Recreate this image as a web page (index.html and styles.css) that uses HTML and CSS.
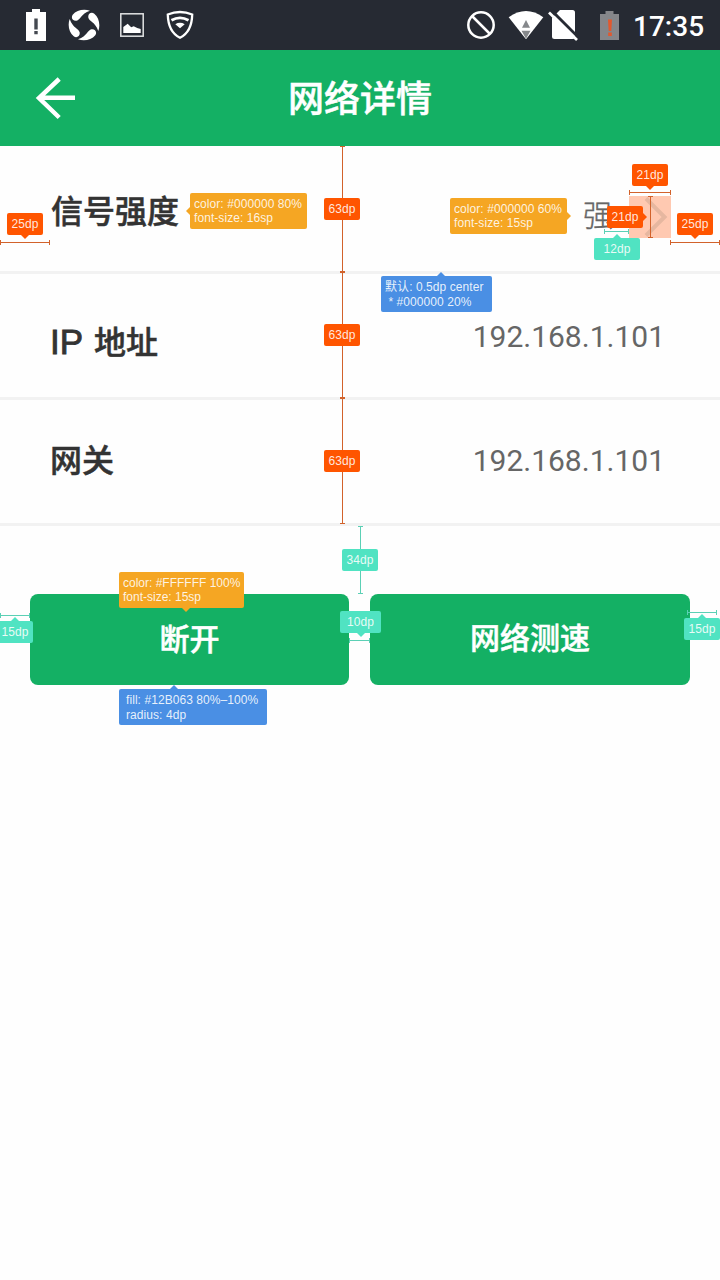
FILE: index.html
```html
<!DOCTYPE html>
<html lang="zh-CN">
<head>
<meta charset="utf-8">
<title>网络详情</title>
<link rel="stylesheet" href="styles.css">
</head>
<body>
<div class="screen">
  <div class="status-bar">
    <div class="status-group status-left">
      <svg width="20" height="32" viewBox="26 9 20 32"><path fill="#fff" d="M32 9h8v3h6v29H26V12h6z"/><path fill="#444951" d="M34.300 18.500h3.400v11h-3.400zM34.300 31h3.400v3.200h-3.400z"/></svg>
      <svg width="32" height="32" viewBox="-16 -16 32 32">
        <g fill="#fff">
          <path id="blade" d="M6 -14.300C0 -16.600 -7.500 -15 -11.300 -10.300C-13.500 -7 -11 -3.800 -7.500 -4.300C-3.500 -5 -3.500 -11 6 -14.300Z"/>
          <use href="#blade" transform="rotate(90)"/>
          <use href="#blade" transform="rotate(180)"/>
          <use href="#blade" transform="rotate(270)"/>
        </g>
      </svg>
      <svg width="24" height="24" viewBox="0 0 24 24"><rect x=".8" y=".8" width="22.400" height="22.400" fill="none" stroke="#e2e3e4" stroke-width="1.500"/><path fill="#fff" d="M3.300 20V14l4.400-3.300 3.500 3.600 2.500-1 3.500 1.700 3.500 1v4z"/></svg>
      <svg width="28" height="30" viewBox="166 10 28 30"><g fill="none" stroke="#fff"><path stroke-width="2.300" d="M167.800 14.500Q180 9.500 192.200 14.500C192 25.500 188.500 33.500 180 37.800C171.500 33.500 168 25.500 167.800 14.500Z"/><path stroke-width="2.800" d="M171.500 20.300Q180 15.300 188.500 20.300"/></g><path fill="#fff" d="M175.300 24.200Q180 21.300 184.700 24.200L180 28.300z"/></svg>
    </div>
    <div class="status-group status-right">
      <svg class="no-entry" width="30" height="30" viewBox="466 10 30 30"><g fill="none" stroke="#fff" stroke-width="2.500"><circle cx="481" cy="25" r="12.700"/><path d="M472 16l18 18"/></g></svg>
      <svg class="wifi" width="36" height="30" viewBox="508 10 36 30"><path fill="#fff" d="M508.700 17.200Q526 5 543.300 17.200L526 39.200z"/><path fill="#85888b" d="M522 27.700l4-7.700 4 7.700zM521.500 30.800h9l-4.500 8z"/></svg>
      <svg class="sim" width="30" height="32" viewBox="548 10 30 32"><path fill="#fff" d="M560 11h12.500q2.500 0 2.500 2.500v24q0 2.500-2.500 2.500h-18q-2.500 0-2.500-2.500V19z"/><path stroke="#262a33" stroke-width="3" d="M550.500 10.500l28 28"/><path stroke="#fff" stroke-width="2.700" d="M549 13.500l28 27.500"/></svg>
      <svg class="battery" width="19" height="29" viewBox="0 0 19 29"><path fill="#85868a" d="M5.500 0h8v3H19v26H0V3h5.500z"/><path fill="#e2582e" d="M8 8.500h4L11.300 20H8.700zM8.200 21.500h3.600V25H8.200z"/></svg>
      <span class="clock">17:35</span>
    </div>
  </div>

  <div class="app-bar">
    <svg class="back" width="41" height="43" viewBox="35 77 41 43"><path fill="none" stroke="#fff" stroke-width="4.500" d="M59.200 79L39 98l20.200 19.500M38.500 97.700H75"/></svg>
    <h1 class="title">网络详情</h1>
  </div>

  <div class="rows">
    <div class="row row-first">
      <span class="label">信号强度</span>
      <span class="strength">强</span>
      <span class="chevron-box"><svg width="42" height="42" viewBox="0 0 42 42"><path fill="none" stroke="#e6b7a0" stroke-width="4" d="M17 2.500L35.500 21 17 39.500"/></svg></span>
    </div>
    <div class="row row-ip">
      <span class="label"><span class="latin">IP</span> 地址</span>
      <span class="value">192.168.1.101</span>
    </div>
    <div class="row row-gateway">
      <span class="label">网关</span>
      <span class="value">192.168.1.101</span>
    </div>
  </div>

  <div class="actions">
    <button class="button">断开</button>
    <button class="button button-speed">网络测速</button>
  </div>

  <svg class="measures" width="720" height="1280" viewBox="0 0 720 1280">
    <path class="orange" d="M342.500 146V523M340 146.500h5M340 271.500h5M340 272.500h5M340 397.500h5M340 398.500h5M340 523.500h5
      M0 242.500H50M.5 240v5M49.500 240v5
      M629 192.500H671M629.500 190v5M670.500 190v5
      M650.500 196V238M648 196.500h5M648 237.500h5
      M670 242.500H720M670.500 240v5M719.500 240v5"/>
    <path class="mint" d="M604 231.500H629M604.500 229v5M628.500 229v5
      M360.500 526V594M358 526.500h5M358 593.500h5
      M0 615.500H30M.5 613v5M29.500 613v5
      M349 640.500H370M349.500 638v5M369.500 638v5
      M687 612.500H717M687.500 610v5M716.500 610v5"/>
  </svg>

  <div class="tag size down t-left25">25dp</div>
  <div class="tag size t-row1">63dp</div>
  <div class="tag size t-row2">63dp</div>
  <div class="tag size t-row3">63dp</div>
  <div class="tag size down t-icon-w">21dp</div>
  <div class="tag size right t-icon-h">21dp</div>
  <div class="tag size down t-right25">25dp</div>
  <div class="tag gap up t-gap12">12dp</div>
  <div class="tag gap t-gap34">34dp</div>
  <div class="tag gap up t-gap15a">15dp</div>
  <div class="tag gap down t-gap10">10dp</div>
  <div class="tag gap up t-gap15b">15dp</div>
  <div class="tag text left t-label">color: #000000 80%<br>font-size: 16sp</div>
  <div class="tag text right t-value">color: #000000 60%<br>font-size: 15sp</div>
  <div class="tag text down t-button">color: #FFFFFF 100%<br>font-size: 15sp</div>
  <div class="tag fill up t-divider">默认: 0.5dp center<br>&nbsp;* #000000 20%</div>
  <div class="tag fill up t-fill">fill: #12B063 80%–100%<br>radius: 4dp</div>
</div>
</body>
</html>
```

FILE: styles.css
```css
* { box-sizing: border-box; }

body {
  margin: 0;
  background: #fefefe;
  font-family: Roboto, "Noto Sans CJK SC", sans-serif;
}

svg { display: block; }

.screen {
  position: relative;
  width: 720px;
  height: 1280px;
  overflow: hidden;
}

/* Status bar */
.status-bar {
  display: flex;
  justify-content: space-between;
  height: 50px;
  padding: 0 16px 0 26px;
  background: #262a33;
}
.status-group { display: flex; align-items: center; height: 50px; }
.status-left { gap: 22px; }
.status-left svg:nth-child(3) { margin-left: -2px; }
.wifi { margin-left: 12px; }
.sim { margin-left: 4px; }
.battery { margin-left: 22px; }
.clock {
  width: 71px;
  margin-left: 14px;
  padding-top: 3px;
  color: #fff;
  font-size: 28px;
  font-weight: 500;
  line-height: 32px;
  white-space: nowrap;
}

/* App bar */
.app-bar {
  display: grid;
  grid-template-columns: 41px 1fr 41px;
  align-items: center;
  height: 96px;
  padding: 0 35px;
  background: #14b064;
}
.title {
  margin: 0;
  padding-top: 4px;
  color: #fff;
  font-size: 36px;
  font-weight: 500;
  line-height: 52px;
  text-align: center;
  -webkit-text-stroke: .5px #fff;
}

/* Detail rows */
.row {
  display: flex;
  align-items: center;
  height: 126px;
  padding: 0 56px 0 50px;
  border-bottom: 3px solid #f2f2f2;
}
.row-first { height: 128px; padding: 17px 49px 0 50px; }
.label {
  margin-right: auto;
  color: #333;
  font-size: 32px;
  font-weight: 500;
  line-height: 46px;
  -webkit-text-stroke: .5px #333;
}
.row-first .label { margin-top: -11px; padding-left: 1px; }
.row-ip .label { padding-top: 14px; }
.row-gateway .label { margin-top: -1px; }
.latin {
  margin-right: 3px;
  font: 35px "Liberation Sans", sans-serif;
  -webkit-text-stroke: .9px #333;
}
.strength {
  margin: -12px 16px 0 0;
  padding-top: 10px;
  color: #666;
  font-size: 30px;
  font-weight: 300;
  line-height: 44px;
  -webkit-text-stroke: .4px #666;
}
.chevron-box { width: 42px; height: 42px; background: #ffc9b1; }
.value {
  margin-right: -1px;
  padding-top: 3px;
  color: #666;
  font-family: "Noto Sans", Roboto, sans-serif;
  font-family: Roboto, sans-serif;
  font-size: 30px;
  line-height: 36px;
}
.row-gateway .value { margin-top: -4px; }

/* Buttons */
.actions {
  display: grid;
  grid-template-columns: 319px 320px;
  gap: 21px;
  padding: 68px 30px 0;
}
.button {
  height: 91px;
  padding: 0;
  border: 0;
  border-radius: 8px;
  background: #14b064;
  color: #fff;
  font: 500 30px/44px Roboto, "Noto Sans CJK SC", sans-serif;
  -webkit-text-stroke: .5px #fff;
}
.button-speed { padding-bottom: 2px; }

/* Spec annotations placed over the screen */
.measures { position: absolute; inset: 0; fill: none; }
.orange { stroke: #d2622b; }
.mint { stroke: #5bd0b5; }

.tag {
  position: absolute;
  border-radius: 2px;
  color: rgba(255, 255, 255, .88);
  font: 12px/14px "Liberation Sans", "Noto Sans CJK SC", sans-serif;
  letter-spacing: .07px;
  white-space: nowrap;
}
.tag.size, .tag.gap { width: 36px; height: 22px; line-height: 22px; text-align: center; }
.tag.text, .tag.fill { height: 36px; padding: 4px; }
.tag.fill { line-height: 15px; }
.size { background: #ff5500; --tone: #ff5500; }
.gap { background: #50e3c2; --tone: #50e3c2; }
.text { background: #f5a623; --tone: #f5a623; }
.fill { background: #4a8fe4; --tone: #4a8fe4; }

.tag::after { position: absolute; border: 4px solid transparent; }
.up::after { content: ""; bottom: 100%; left: var(--tip, 50%); margin-left: -4px; border-top: 0; border-bottom-color: var(--tone); }
.down::after { content: ""; top: 100%; left: var(--tip, 50%); margin-left: -4px; border-bottom: 0; border-top-color: var(--tone); }
.left::after { content: ""; right: 100%; top: 50%; margin-top: -4px; border-left: 0; border-right-color: var(--tone); }
.right::after { content: ""; left: 100%; top: 50%; margin-top: -4px; border-right: 0; border-left-color: var(--tone); }

.t-left25 { left: 7px; top: 213px; }
.t-row1 { left: 324px; top: 198px; }
.t-row2 { left: 324px; top: 324px; }
.t-row3 { left: 324px; top: 450px; }
.t-icon-w { left: 632px; top: 164px; }
.t-icon-h { left: 607px; top: 206px; }
.t-right25 { left: 677px; top: 213px; }
.tag.t-gap12 { left: 594px; top: 238px; width: 46px; }
.t-gap34 { left: 342px; top: 549px; }
.t-gap15a { left: -3px; top: 621px; }
.tag.t-gap10 { left: 340px; top: 611px; width: 41px; }
.t-gap15b { left: 684px; top: 618px; }
.t-label { left: 190px; top: 193px; width: 117px; }
.t-value { left: 450px; top: 198px; width: 117px; }
.t-button { left: 119px; top: 572px; width: 125px; --tip: 67px; letter-spacing: 0; }
.t-divider { left: 381px; top: 276px; width: 111px; --tip: 60px; }
.tag.t-fill { left: 119px; top: 689px; width: 148px; padding-left: 7px; --tip: 55px; }
```
